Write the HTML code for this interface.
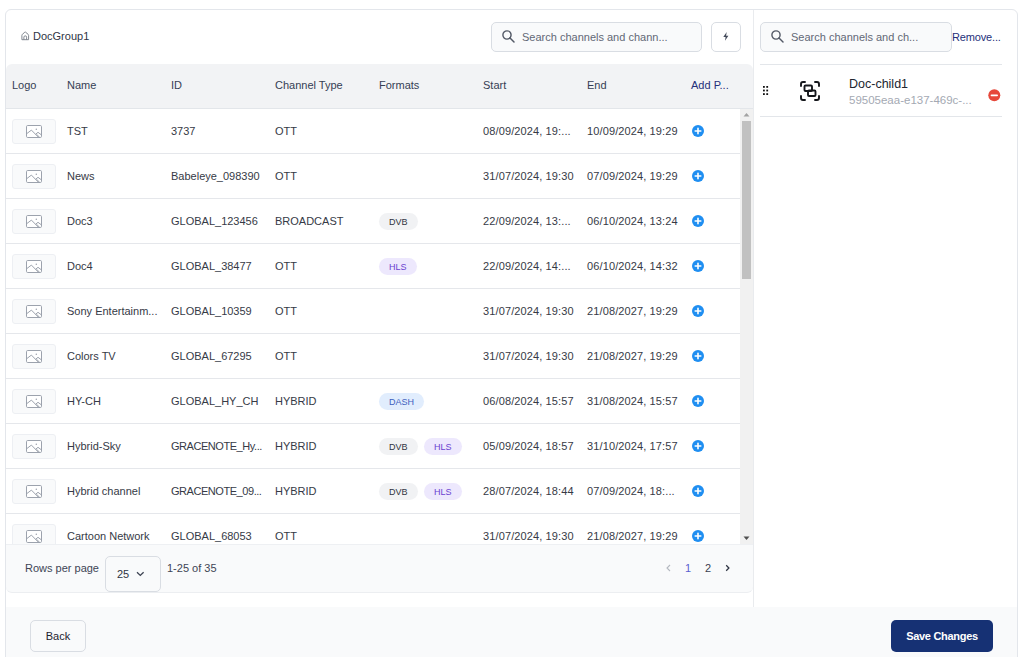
<!DOCTYPE html>
<html><head><meta charset="utf-8">
<style>
*{box-sizing:border-box;margin:0;padding:0}
html,body{width:1021px;height:657px;overflow:hidden;background:#fff}
body{position:relative;font-family:"Liberation Sans",sans-serif;font-size:11px;color:#30343f}
.abs{position:absolute}
.card{position:absolute;left:5px;top:9px;width:1013px;height:700px;border:1px solid #e3e6eb;border-radius:6px;background:#fff}
.title{position:absolute;left:33px;top:29px;line-height:14px;font-size:11px;color:#2f3545;white-space:nowrap}
.search{position:absolute;top:22px;height:30px;background:#f9fafb;border:1px solid #d9dde3;border-radius:5px}
.search .ph{position:absolute;top:0;line-height:28px;color:#626876;white-space:nowrap}
.search svg{position:absolute;top:7px}
.bolt{position:absolute;left:711px;top:22px;width:30px;height:30px;border:1px solid #d9dde3;border-radius:5px;background:#fff}
.divider{position:absolute;left:753px;top:10px;width:1px;height:597px;background:#e9ebee}
.thead{position:absolute;left:6px;top:64px;width:747px;height:45px;background:#f2f3f5;border-radius:6px 6px 0 0;border-bottom:1px solid #e3e6ea}
.th{position:absolute;top:-1px;line-height:44px;color:#353e54;white-space:nowrap}
.body{position:absolute;left:6px;top:109px;width:734px;height:436px;overflow:hidden}
.row{position:absolute;left:-6px;width:740px;height:45px;border-bottom:1px solid #e5e7eb}
.row .c{position:absolute;top:0;line-height:44px;white-space:nowrap;color:#363a46}
.row .dt{letter-spacing:0.12px}
.logo{position:absolute;left:12px;top:10px;width:44px;height:25px;background:#f9fafb;border:1px solid #edeff3;border-radius:3px}
.logo svg{position:absolute;left:13px;top:5px}
.plus{position:absolute;left:692px;top:16px;width:12px;height:12px}
.plus svg{display:block}
.badge{position:absolute;top:14px;height:17px;line-height:18px;border-radius:9px;font-size:9px;padding:0 10px;white-space:nowrap}
.badge.dvb{background:#f1f2f4;color:#30343f}
.badge.hls{background:#ede8fd;color:#6a3fd0}
.badge.dash{background:#e1edfd;color:#3e5fbd}
.sb{position:absolute;left:740px;top:109px;width:13px;height:436px;background:#f1f1f1}
.thumb{position:absolute;left:742px;top:121px;width:9px;height:158px;background:#c1c1c1}
.pag{position:absolute;left:6px;top:544px;width:747px;height:49px;background:#f9fafb;border-bottom:1px solid #eceef1;border-radius:0 0 6px 6px;box-shadow:inset 0 1px 0 #eef0f3}
.footer{position:absolute;left:6px;top:607px;width:1011px;height:60px;background:#f9fafb}
.btn{position:absolute;top:620px;height:32px;border-radius:5px;white-space:nowrap;text-align:center}
.back{left:30px;width:56px;background:#f9fafb;border:1px solid #d9dde3;line-height:31px;color:#1f2330}
.save{left:891px;width:102px;background:#163174;color:#fff;font-weight:bold;line-height:32px;letter-spacing:-0.3px}
.rsep{position:absolute;left:760px;width:242px;height:1px;background:#e3e6ea}
</style></head><body>
<div class="card"></div>
<svg class="abs" style="left:21px;top:31px" width="9" height="10" viewBox="0 0 9 10"><path d="M0.9 4.3 Q0.9 3.7 1.4 3.3 L3.8 1.2 Q4.2 0.9 4.6 1.2 L7.1 3.3 Q7.6 3.7 7.6 4.3 V8.7 H0.9 Z" fill="none" stroke="#80868f" stroke-width="1" stroke-linejoin="round"/><path d="M2.9 8.7 V6.2 A1.35 1.35 0 0 1 5.6 6.2 V8.7" fill="none" stroke="#80868f" stroke-width="1"/></svg>
<div class="title">DocGroup1</div>
<div class="search" style="left:491px;width:211px">
<svg style="left:10px" width="14" height="14" viewBox="0 0 14 14"><circle cx="5" cy="5" r="4.1" fill="none" stroke="#535966" stroke-width="1.4"/><path d="M8 8 L12 12" stroke="#535966" stroke-width="1.5" stroke-linecap="round"/></svg>
<div class="ph" style="left:30px">Search channels and chann...</div>
</div>
<div class="bolt"><svg class="abs" style="left:11px;top:9px" width="7" height="10" viewBox="0 0 7 10"><path d="M3.7 0 L0.3 5 H2.6 L2 8.8 L5.4 3.8 H3.1 Z" fill="#454c5b"/></svg></div>
<div class="divider"></div>
<div class="thead">
<div class="th" style="left:6px">Logo</div>
<div class="th" style="left:61px">Name</div>
<div class="th" style="left:165px">ID</div>
<div class="th" style="left:269px">Channel Type</div>
<div class="th" style="left:373px">Formats</div>
<div class="th" style="left:477px">Start</div>
<div class="th" style="left:581px">End</div>
<div class="th" style="left:685px;color:#25307a">Add P...</div>
</div>
<div class="body">
<div class="row" style="top:0px">
<div class="logo"><svg width="16" height="13" viewBox="0 0 16 13"><rect x="0.5" y="0.5" width="15" height="12" rx="1.2" fill="#fff" stroke="#9ca2ad" stroke-width="1"/><path d="M0.7 8.7 L5.4 5.1 L12.6 12.4 M9.7 9.2 L12 7.3 L15.3 9.8 M10.7 9.3 L13.5 12.3" fill="none" stroke="#9ca2ad" stroke-width="1"/><circle cx="10.3" cy="4.3" r="0.75" fill="#9ca2ad"/></svg></div>
<div class="c" style="left:67px">TST</div>
<div class="c" style="left:171px">3737</div>
<div class="c" style="left:275px">OTT</div>

<div class="c dt" style="left:483px">08/09/2024, 19:...</div>
<div class="c dt" style="left:587px">10/09/2024, 19:29</div>
<div class="plus"><svg width="12" height="12" viewBox="0 0 12 12"><circle cx="6" cy="6" r="6" fill="#1f8ef1"/><path d="M6 3.2V8.8M3.2 6H8.8" stroke="#fff" stroke-width="1.6" stroke-linecap="round"/></svg></div>
</div><div class="row" style="top:45px">
<div class="logo"><svg width="16" height="13" viewBox="0 0 16 13"><rect x="0.5" y="0.5" width="15" height="12" rx="1.2" fill="#fff" stroke="#9ca2ad" stroke-width="1"/><path d="M0.7 8.7 L5.4 5.1 L12.6 12.4 M9.7 9.2 L12 7.3 L15.3 9.8 M10.7 9.3 L13.5 12.3" fill="none" stroke="#9ca2ad" stroke-width="1"/><circle cx="10.3" cy="4.3" r="0.75" fill="#9ca2ad"/></svg></div>
<div class="c" style="left:67px">News</div>
<div class="c" style="left:171px">Babeleye_098390</div>
<div class="c" style="left:275px">OTT</div>

<div class="c dt" style="left:483px">31/07/2024, 19:30</div>
<div class="c dt" style="left:587px">07/09/2024, 19:29</div>
<div class="plus"><svg width="12" height="12" viewBox="0 0 12 12"><circle cx="6" cy="6" r="6" fill="#1f8ef1"/><path d="M6 3.2V8.8M3.2 6H8.8" stroke="#fff" stroke-width="1.6" stroke-linecap="round"/></svg></div>
</div><div class="row" style="top:90px">
<div class="logo"><svg width="16" height="13" viewBox="0 0 16 13"><rect x="0.5" y="0.5" width="15" height="12" rx="1.2" fill="#fff" stroke="#9ca2ad" stroke-width="1"/><path d="M0.7 8.7 L5.4 5.1 L12.6 12.4 M9.7 9.2 L12 7.3 L15.3 9.8 M10.7 9.3 L13.5 12.3" fill="none" stroke="#9ca2ad" stroke-width="1"/><circle cx="10.3" cy="4.3" r="0.75" fill="#9ca2ad"/></svg></div>
<div class="c" style="left:67px">Doc3</div>
<div class="c" style="left:171px">GLOBAL_123456</div>
<div class="c" style="left:275px">BROADCAST</div>
<span class="badge dvb" style="left:379px">DVB</span>
<div class="c dt" style="left:483px">22/09/2024, 13:...</div>
<div class="c dt" style="left:587px">06/10/2024, 13:24</div>
<div class="plus"><svg width="12" height="12" viewBox="0 0 12 12"><circle cx="6" cy="6" r="6" fill="#1f8ef1"/><path d="M6 3.2V8.8M3.2 6H8.8" stroke="#fff" stroke-width="1.6" stroke-linecap="round"/></svg></div>
</div><div class="row" style="top:135px">
<div class="logo"><svg width="16" height="13" viewBox="0 0 16 13"><rect x="0.5" y="0.5" width="15" height="12" rx="1.2" fill="#fff" stroke="#9ca2ad" stroke-width="1"/><path d="M0.7 8.7 L5.4 5.1 L12.6 12.4 M9.7 9.2 L12 7.3 L15.3 9.8 M10.7 9.3 L13.5 12.3" fill="none" stroke="#9ca2ad" stroke-width="1"/><circle cx="10.3" cy="4.3" r="0.75" fill="#9ca2ad"/></svg></div>
<div class="c" style="left:67px">Doc4</div>
<div class="c" style="left:171px">GLOBAL_38477</div>
<div class="c" style="left:275px">OTT</div>
<span class="badge hls" style="left:379px">HLS</span>
<div class="c dt" style="left:483px">22/09/2024, 14:...</div>
<div class="c dt" style="left:587px">06/10/2024, 14:32</div>
<div class="plus"><svg width="12" height="12" viewBox="0 0 12 12"><circle cx="6" cy="6" r="6" fill="#1f8ef1"/><path d="M6 3.2V8.8M3.2 6H8.8" stroke="#fff" stroke-width="1.6" stroke-linecap="round"/></svg></div>
</div><div class="row" style="top:180px">
<div class="logo"><svg width="16" height="13" viewBox="0 0 16 13"><rect x="0.5" y="0.5" width="15" height="12" rx="1.2" fill="#fff" stroke="#9ca2ad" stroke-width="1"/><path d="M0.7 8.7 L5.4 5.1 L12.6 12.4 M9.7 9.2 L12 7.3 L15.3 9.8 M10.7 9.3 L13.5 12.3" fill="none" stroke="#9ca2ad" stroke-width="1"/><circle cx="10.3" cy="4.3" r="0.75" fill="#9ca2ad"/></svg></div>
<div class="c" style="left:67px">Sony Entertainm...</div>
<div class="c" style="left:171px">GLOBAL_10359</div>
<div class="c" style="left:275px">OTT</div>

<div class="c dt" style="left:483px">31/07/2024, 19:30</div>
<div class="c dt" style="left:587px">21/08/2027, 19:29</div>
<div class="plus"><svg width="12" height="12" viewBox="0 0 12 12"><circle cx="6" cy="6" r="6" fill="#1f8ef1"/><path d="M6 3.2V8.8M3.2 6H8.8" stroke="#fff" stroke-width="1.6" stroke-linecap="round"/></svg></div>
</div><div class="row" style="top:225px">
<div class="logo"><svg width="16" height="13" viewBox="0 0 16 13"><rect x="0.5" y="0.5" width="15" height="12" rx="1.2" fill="#fff" stroke="#9ca2ad" stroke-width="1"/><path d="M0.7 8.7 L5.4 5.1 L12.6 12.4 M9.7 9.2 L12 7.3 L15.3 9.8 M10.7 9.3 L13.5 12.3" fill="none" stroke="#9ca2ad" stroke-width="1"/><circle cx="10.3" cy="4.3" r="0.75" fill="#9ca2ad"/></svg></div>
<div class="c" style="left:67px">Colors TV</div>
<div class="c" style="left:171px">GLOBAL_67295</div>
<div class="c" style="left:275px">OTT</div>

<div class="c dt" style="left:483px">31/07/2024, 19:30</div>
<div class="c dt" style="left:587px">21/08/2027, 19:29</div>
<div class="plus"><svg width="12" height="12" viewBox="0 0 12 12"><circle cx="6" cy="6" r="6" fill="#1f8ef1"/><path d="M6 3.2V8.8M3.2 6H8.8" stroke="#fff" stroke-width="1.6" stroke-linecap="round"/></svg></div>
</div><div class="row" style="top:270px">
<div class="logo"><svg width="16" height="13" viewBox="0 0 16 13"><rect x="0.5" y="0.5" width="15" height="12" rx="1.2" fill="#fff" stroke="#9ca2ad" stroke-width="1"/><path d="M0.7 8.7 L5.4 5.1 L12.6 12.4 M9.7 9.2 L12 7.3 L15.3 9.8 M10.7 9.3 L13.5 12.3" fill="none" stroke="#9ca2ad" stroke-width="1"/><circle cx="10.3" cy="4.3" r="0.75" fill="#9ca2ad"/></svg></div>
<div class="c" style="left:67px">HY-CH</div>
<div class="c" style="left:171px">GLOBAL_HY_CH</div>
<div class="c" style="left:275px">HYBRID</div>
<span class="badge dash" style="left:379px">DASH</span>
<div class="c dt" style="left:483px">06/08/2024, 15:57</div>
<div class="c dt" style="left:587px">31/08/2024, 15:57</div>
<div class="plus"><svg width="12" height="12" viewBox="0 0 12 12"><circle cx="6" cy="6" r="6" fill="#1f8ef1"/><path d="M6 3.2V8.8M3.2 6H8.8" stroke="#fff" stroke-width="1.6" stroke-linecap="round"/></svg></div>
</div><div class="row" style="top:315px">
<div class="logo"><svg width="16" height="13" viewBox="0 0 16 13"><rect x="0.5" y="0.5" width="15" height="12" rx="1.2" fill="#fff" stroke="#9ca2ad" stroke-width="1"/><path d="M0.7 8.7 L5.4 5.1 L12.6 12.4 M9.7 9.2 L12 7.3 L15.3 9.8 M10.7 9.3 L13.5 12.3" fill="none" stroke="#9ca2ad" stroke-width="1"/><circle cx="10.3" cy="4.3" r="0.75" fill="#9ca2ad"/></svg></div>
<div class="c" style="left:67px">Hybrid-Sky</div>
<div class="c" style="left:171px;letter-spacing:-0.45px">GRACENOTE_Hy...</div>
<div class="c" style="left:275px">HYBRID</div>
<span class="badge dvb" style="left:379px">DVB</span><span class="badge hls" style="left:424px">HLS</span>
<div class="c dt" style="left:483px">05/09/2024, 18:57</div>
<div class="c dt" style="left:587px">31/10/2024, 17:57</div>
<div class="plus"><svg width="12" height="12" viewBox="0 0 12 12"><circle cx="6" cy="6" r="6" fill="#1f8ef1"/><path d="M6 3.2V8.8M3.2 6H8.8" stroke="#fff" stroke-width="1.6" stroke-linecap="round"/></svg></div>
</div><div class="row" style="top:360px">
<div class="logo"><svg width="16" height="13" viewBox="0 0 16 13"><rect x="0.5" y="0.5" width="15" height="12" rx="1.2" fill="#fff" stroke="#9ca2ad" stroke-width="1"/><path d="M0.7 8.7 L5.4 5.1 L12.6 12.4 M9.7 9.2 L12 7.3 L15.3 9.8 M10.7 9.3 L13.5 12.3" fill="none" stroke="#9ca2ad" stroke-width="1"/><circle cx="10.3" cy="4.3" r="0.75" fill="#9ca2ad"/></svg></div>
<div class="c" style="left:67px">Hybrid channel</div>
<div class="c" style="left:171px;letter-spacing:-0.45px">GRACENOTE_09...</div>
<div class="c" style="left:275px">HYBRID</div>
<span class="badge dvb" style="left:379px">DVB</span><span class="badge hls" style="left:424px">HLS</span>
<div class="c dt" style="left:483px">28/07/2024, 18:44</div>
<div class="c dt" style="left:587px">07/09/2024, 18:...</div>
<div class="plus"><svg width="12" height="12" viewBox="0 0 12 12"><circle cx="6" cy="6" r="6" fill="#1f8ef1"/><path d="M6 3.2V8.8M3.2 6H8.8" stroke="#fff" stroke-width="1.6" stroke-linecap="round"/></svg></div>
</div><div class="row" style="top:405px">
<div class="logo"><svg width="16" height="13" viewBox="0 0 16 13"><rect x="0.5" y="0.5" width="15" height="12" rx="1.2" fill="#fff" stroke="#9ca2ad" stroke-width="1"/><path d="M0.7 8.7 L5.4 5.1 L12.6 12.4 M9.7 9.2 L12 7.3 L15.3 9.8 M10.7 9.3 L13.5 12.3" fill="none" stroke="#9ca2ad" stroke-width="1"/><circle cx="10.3" cy="4.3" r="0.75" fill="#9ca2ad"/></svg></div>
<div class="c" style="left:67px">Cartoon Network</div>
<div class="c" style="left:171px">GLOBAL_68053</div>
<div class="c" style="left:275px">OTT</div>

<div class="c dt" style="left:483px">31/07/2024, 19:30</div>
<div class="c dt" style="left:587px">21/08/2027, 19:29</div>
<div class="plus"><svg width="12" height="12" viewBox="0 0 12 12"><circle cx="6" cy="6" r="6" fill="#1f8ef1"/><path d="M6 3.2V8.8M3.2 6H8.8" stroke="#fff" stroke-width="1.6" stroke-linecap="round"/></svg></div>
</div>
</div>
<div class="sb"></div>
<svg class="abs" style="left:743px;top:112px" width="7" height="5" viewBox="0 0 7 5"><path d="M0.5 4.5 L3.5 1 L6.5 4.5 Z" fill="#a3a3a3"/></svg>
<div class="thumb"></div>
<svg class="abs" style="left:743px;top:536px" width="7" height="5" viewBox="0 0 7 5"><path d="M0.5 0.5 L3.5 4 L6.5 0.5 Z" fill="#505050"/></svg>
<div class="pag">
<div class="abs" style="left:19px;top:17px;line-height:14px;color:#404555">Rows per page</div>
<div class="abs" style="left:99px;top:12px;width:56px;height:36px;border:1px solid #d9dde3;border-radius:5px;background:#f9fafb"></div>
<div class="abs" style="left:111px;top:23px;line-height:14px;font-size:11px;color:#2f3443">25</div>
<svg class="abs" style="left:130px;top:27px" width="9" height="6" viewBox="0 0 9 6"><path d="M1 1.2 L4.3 4.4 L7.6 1.2" fill="none" stroke="#3d4352" stroke-width="1.3"/></svg>
<div class="abs" style="left:161px;top:17px;line-height:14px;color:#404555">1-25 of 35</div>
<svg class="abs" style="left:660px;top:20px" width="5" height="8" viewBox="0 0 5 8"><path d="M4 1 L1 4 L4 7" fill="none" stroke="#b4b8c0" stroke-width="1.1"/></svg>
<div class="abs" style="left:679px;top:17px;line-height:14px;color:#5a5fd0">1</div>
<div class="abs" style="left:699px;top:17px;line-height:14px;color:#3b4050">2</div>
<svg class="abs" style="left:719px;top:20px" width="5" height="8" viewBox="0 0 5 8"><path d="M1.2 1.3 L3.9 4 L1.2 6.7" fill="none" stroke="#2f3443" stroke-width="1.25"/></svg>
</div>

<div class="search" style="left:760px;width:192px">
<svg style="left:10px" width="14" height="14" viewBox="0 0 14 14"><circle cx="5" cy="5" r="4.1" fill="none" stroke="#535966" stroke-width="1.4"/><path d="M8 8 L12 12" stroke="#535966" stroke-width="1.5" stroke-linecap="round"/></svg>
<div class="ph" style="left:30px">Search channels and ch...</div>
</div>
<div class="abs" style="left:952px;top:30px;line-height:14px;color:#25307a;white-space:nowrap;letter-spacing:-0.15px">Remove...</div>
<div class="rsep" style="top:64px"></div>
<svg class="abs" style="left:763px;top:86px" width="6" height="10" viewBox="0 0 6 10"><g fill="#111"><rect x="0" y="0" width="1.8" height="1.8"/><rect x="3.3" y="0" width="1.8" height="1.8"/><rect x="0" y="3.6" width="1.8" height="1.8"/><rect x="3.3" y="3.6" width="1.8" height="1.8"/><rect x="0" y="7.2" width="1.8" height="1.8"/><rect x="3.3" y="7.2" width="1.8" height="1.8"/></g></svg>
<svg class="abs" style="left:799px;top:80px" width="22" height="22" viewBox="0 0 22 22"><g fill="none" stroke="#15171c" stroke-width="1.9" stroke-linecap="round" stroke-linejoin="round"><path d="M2 6 V4 A2 2 0 0 1 4 2 H6"/><path d="M16 2 H18 A2 2 0 0 1 20 4 V6"/><path d="M20 16 V18 A2 2 0 0 1 18 20 H16"/><path d="M6 20 H4 A2 2 0 0 1 2 18 V16"/><rect x="5.5" y="5.5" width="7.5" height="5.5" rx="1"/><rect x="9" y="10.5" width="7.5" height="5.5" rx="1"/></g></svg>
<div class="abs" style="left:849px;top:77px;line-height:15px;font-size:12.5px;color:#22262f;white-space:nowrap">Doc-child1</div>
<div class="abs" style="left:849px;top:94px;line-height:13px;font-size:11.5px;color:#a4a9b3;white-space:nowrap">59505eaa-e137-469c-...</div>
<svg class="abs" style="left:988px;top:89px" width="13" height="13" viewBox="0 0 13 13"><circle cx="6.3" cy="6.3" r="6" fill="#e6483b"/><path d="M3.5 6.3H9.1" stroke="#fff" stroke-width="1.8" stroke-linecap="round"/></svg>
<div class="rsep" style="top:116px"></div>

<div class="footer"></div>
<div class="btn back">Back</div>
<div class="btn save">Save Changes</div>
</body></html>
